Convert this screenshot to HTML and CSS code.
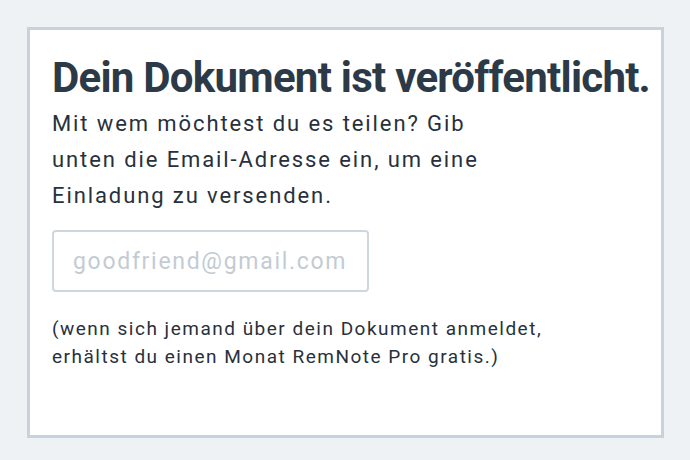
FILE: index.html
```html
<!DOCTYPE html>
<html lang="de">
<head>
  <meta charset="UTF-8" />
  <title>Dokument veröffentlicht</title>
  <link rel="stylesheet" href="styles.css">
</head>
<body>
  <div class="card">
    <h1>Dein Dokument ist veröffentlicht.</h1>
    <p class="lead">Mit wem möchtest du es teilen? Gib<br>unten die Email-Adresse ein, um eine<br>Einladung zu versenden.</p>
    <input type="email" class="email" placeholder="goodfriend@gmail.com"/>
    <p class="note">(wenn sich jemand über dein Dokument anmeldet,<br>erhältst du einen Monat RemNote Pro gratis.)</p>
  </div>
</body>
</html>
```
FILE: styles.css
```css
body {
  font-family: Roboto, 'Liberation Sans', sans-serif;
  background-color: #eef2f5;
  margin: 0;
  padding: 27px;
}

.card {
  box-sizing: border-box;
  width: 637px;
  height: 411px;
  background: #fff;
  border: 3px solid #c9d2dc;
  padding: 23px 22px;
}

h1 {
  color: #2c3a48;
  font-size: 42px;
  font-weight: 700;
  letter-spacing: -0.75px;
  line-height: 50px;
  margin: 0;
  white-space: nowrap;
}

.lead {
  color: #28313b;
  font-size: 22px;
  letter-spacing: 1.9px;
  line-height: 36px;
  margin: 3px 0 0;
}

.email {
  display: block;
  box-sizing: border-box;
  width: 317px;
  height: 62px;
  margin-top: 16px;
  padding: 0 19px;
  border: 2px solid #cfd6de;
  border-radius: 4px;
  font-family: inherit;
  font-size: 23px;
  letter-spacing: 1.7px;
  color: #28313b;
  outline: none;
}

.email::placeholder {
  color: #c3cbd3;
}

.note {
  color: #28313b;
  font-size: 19px;
  letter-spacing: 1.5px;
  line-height: 28px;
  margin: 23px 0 0;
}
```
